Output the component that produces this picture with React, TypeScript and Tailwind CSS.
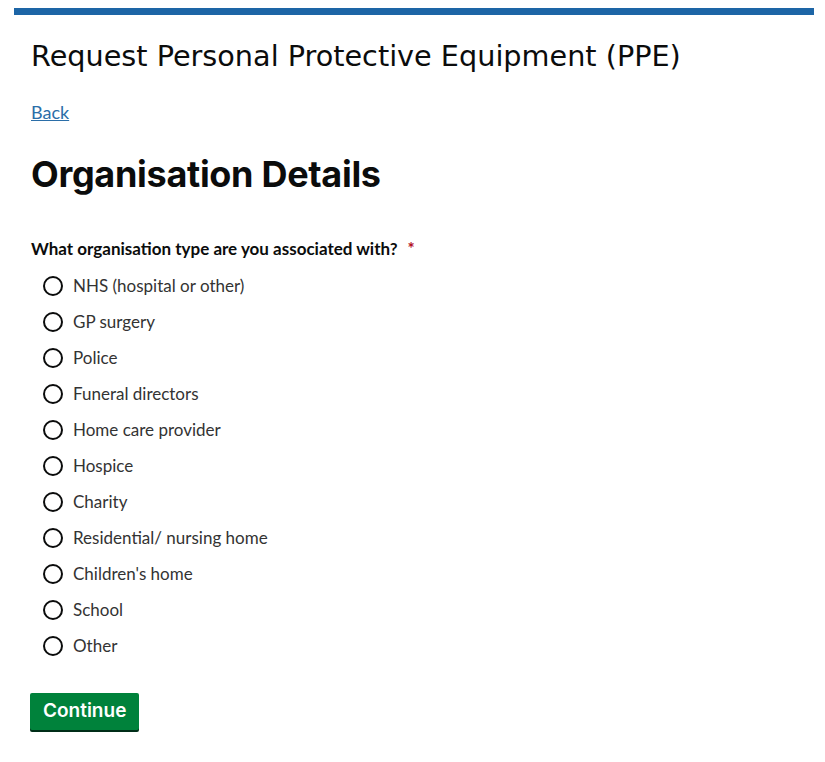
import React, { useState } from 'react';

const options = [
  'NHS (hospital or other)',
  'GP surgery',
  'Police',
  'Funeral directors',
  'Home care provider',
  'Hospice',
  'Charity',
  'Residential/ nursing home',
  "Children's home",
  'School',
  'Other',
];

const heading = { fontFamily: '"DejaVu Sans", "Liberation Sans", sans-serif' };
const headingBold = { fontFamily: 'Inter, "Liberation Sans", sans-serif' };
const body = { fontFamily: 'Lato, "Liberation Sans", sans-serif' };

export default function App() {
  const [selected, setSelected] = useState<string | null>(null);

  return (
    <div className="min-h-[762px] bg-white text-[#0b0c0c]">
      <div className="pt-[8px]">
        <div className="ml-[14px] mr-[11px] h-[7px] bg-[#1d65a6]" />
      </div>

      <div className="px-[31px]">
        <h1 className="mt-[23px] text-[28.7px] leading-[36px] font-normal" style={heading}>
          Request Personal Protective Equipment (PPE)
        </h1>

        <a href="#" className="mt-[26px] inline-block text-[18px] leading-[24px] text-[#2b6ea8] underline" style={body}>
          Back
        </a>

        <h2 className="mt-[27px] text-[36px] leading-[44px] font-bold tracking-[-0.3px]" style={headingBold}>
          Organisation Details
        </h2>

        <fieldset className="mt-[41px]" style={body}>
          <legend className="text-[17px] font-bold leading-[24px]">
            What organisation type are you associated with?
            <span className="ml-[10px] text-[#b10e1e]">*</span>
          </legend>

          <div className="mt-[7px] flex flex-col">
            {options.map((opt) => (
              <label key={opt} className="flex h-[36px] cursor-pointer items-center">
                <span className="ml-[12px] flex h-[20px] w-[20px] items-center justify-center rounded-full border-2 border-[#0b0c0c]">
                  {selected === opt && <span className="h-[10px] w-[10px] rounded-full bg-[#0b0c0c]" />}
                </span>
                <input
                  type="radio"
                  name="orgType"
                  className="sr-only"
                  checked={selected === opt}
                  onChange={() => setSelected(opt)}
                />
                <span className="ml-[10px] text-[17px] text-[#333]">{opt}</span>
              </label>
            ))}
          </div>
        </fieldset>

        <button
          className="-ml-[1px] mt-[29px] h-[37px] rounded-[2px] bg-[#00823b] px-[13px] text-[19px] font-semibold text-white shadow-[0_2px_0_#002d18]"
          style={headingBold}
        >
          Continue
        </button>
      </div>
    </div>
  );
}
